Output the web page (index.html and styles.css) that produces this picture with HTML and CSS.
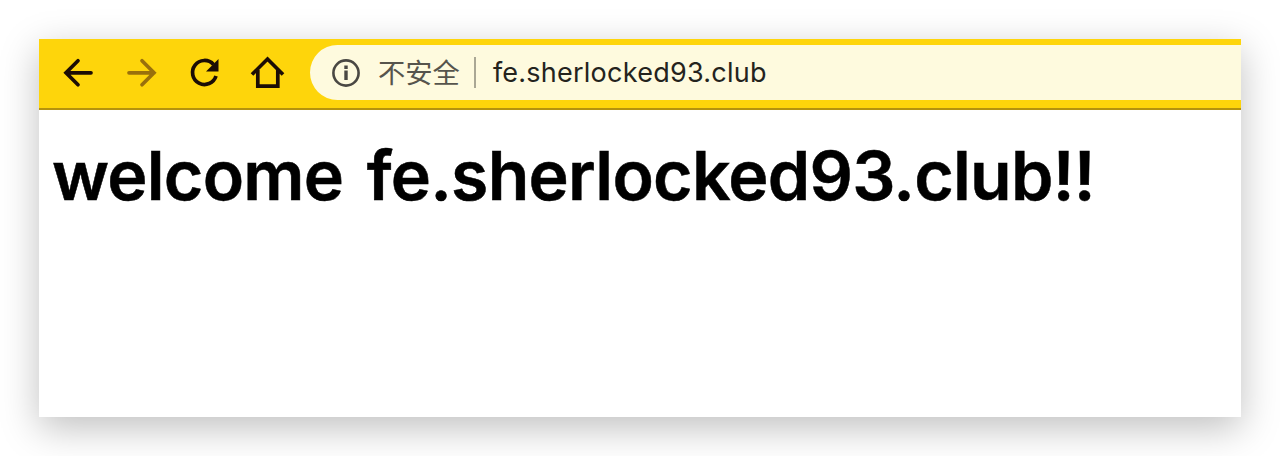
FILE: index.html
```html
<!DOCTYPE html>
<html lang="zh-CN">
<head>
    <meta charset="UTF-8">
    <meta name="viewport" content="width=device-width, initial-scale=1.0">
    <title>fe.sherlocked93.club</title>
    <link rel="stylesheet" href="styles.css">
</head>
<body>
    <div class="window">
        <div class="toolbar">
            <div class="nav">
                <svg class="icon" viewBox="0 0 42 42"><path d="M34 20.800H10M21 8.800l-12 12 12 12"/></svg>
                <svg class="icon disabled" viewBox="0 0 42 42"><path d="M9 20.800h25M22 8.800l12 12-12 12"/></svg>
                <svg class="icon reload" viewBox="0 0 42 42">
                    <path d="M33 24A12 12 0 1 1 30.500 12.500"/>
                    <path class="solid" d="M35.500 7v12.500H23z"/>
                </svg>
                <svg class="icon home" viewBox="0 0 42 42"><path d="M6 22.500L21.500 7 37 22.500M11.800 18v16.200h20V18"/></svg>
            </div>
            <div class="address">
                <svg class="info" viewBox="0 0 28 28">
                    <circle cx="14" cy="14" r="12.600"/>
                    <path class="letter" d="M14 11.500v9.500M14 6.500v3.500"/>
                </svg>
                <span class="status">不安全</span>
                <span class="divider"></span>
                <span class="url">fe.sherlocked93.club</span>
            </div>
        </div>
        <h1>welcome fe.sherlocked93.club!!</h1>
    </div>
</body>
</html>
```
FILE: styles.css
```css
body {
    margin: 0;
    padding: 39px;
    background-color: #ffffff;
    height: 378px;
    overflow: hidden;
}
.window {
    width: 1202px;
    height: 378px;
    background-color: #ffffff;
    box-shadow: 0 11px 36px rgba(0, 0, 0, 0.25);
}
.toolbar {
    display: flex;
    box-sizing: border-box;
    height: 71px;
    padding-top: 6px;
    background-color: #fed50b;
    border-bottom: 2px solid #b5930e;
}
.nav {
    display: flex;
    gap: 21px;
    padding: 7px 0 0 18px;
    width: 253px;
}
.icon {
    width: 42px;
    height: 42px;
    fill: none;
    stroke: #1c0d05;
    stroke-width: 3.7;
    stroke-linecap: round;
}
.icon.home,
.icon.reload {
    stroke-linecap: butt;
}
.icon .solid {
    fill: #1c0d05;
    stroke: none;
}
.icon.disabled {
    stroke: #99700c;
}
.address {
    display: flex;
    align-items: center;
    flex: 1;
    height: 55px;
    padding-left: 22px;
    background-color: #fefade;
    border-radius: 28px 0 0 28px;
}
.info {
    width: 28px;
    height: 28px;
    fill: none;
    stroke: #4a4843;
    stroke-width: 2.6;
}
.info .letter {
    stroke-width: 3.4;
}
.status {
    margin: -3px 0 0 18px;
    font: 27.3px/40px "Noto Sans CJK SC", sans-serif;
    color: #56544c;
}
.divider {
    width: 2px;
    height: 31px;
    margin: 0 17px 0 14px;
    background-color: #aaa794;
}
.url {
    padding-top: 1px;
    font: 27px/40px Inter, sans-serif;
    letter-spacing: 0.24px;
    color: #24231d;
    white-space: nowrap;
}
h1 {
    margin: 24px 0 0 13px;
    font: 600 68px/82px Inter, sans-serif;
    letter-spacing: -0.75px;
    word-spacing: 7px;
    color: #000000;
    -webkit-text-stroke: 0.5px #000000;
    white-space: nowrap;
}
```
